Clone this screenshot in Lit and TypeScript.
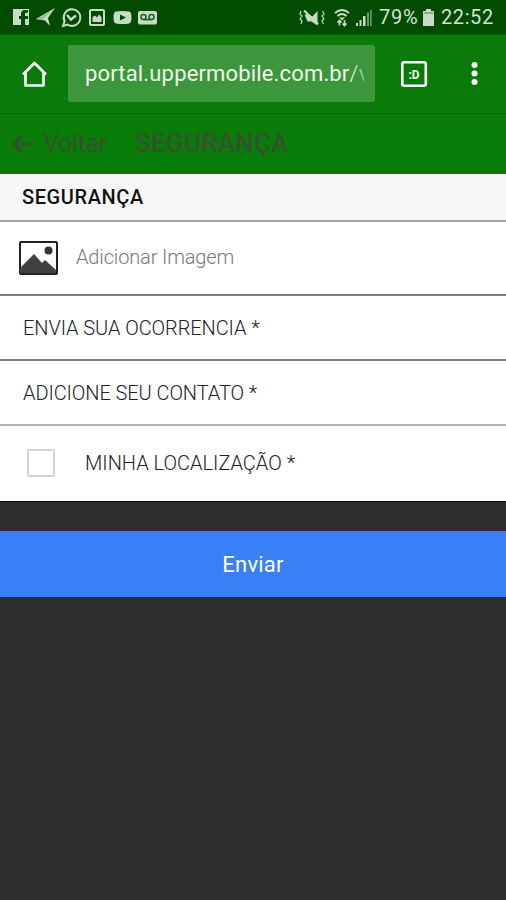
import { LitElement, html, css } from "lit";
import { customElement } from "lit/decorators.js";

@customElement("status-bar")
class StatusBar extends LitElement {
  static styles = css`
    :host { display: flex; height: 34px; background: #004b00; color: #d3e3d0; align-items: center; }
    svg { display: block; flex: none; fill: #c8dcc5; }
    .text { font-size: 20px; line-height: 34px; white-space: nowrap; }
    .percent { width: 41px; margin-left: 5px; letter-spacing: 0.7px; }
    .clock { margin-left: 6px; letter-spacing: 0.6px; }
    .battery { margin-left: 2px; }
    .right { margin-left: auto; display: flex; width: 207px; align-items: center; height: 34px; }
  `;
  render() {
    return html`
      <svg width="170" height="34" viewBox="0 0 170 34">
        <path d="M13 9h16v16h-4v-6h3v-3h-3v-2q0-1.500 2-1.500h1V10h-3q-4 0-4 4v2h-2v3h2v6h-8z" />
        <path d="M55 8L36 19l9 1.500 5 5.500-2-8z" />
        <path d="M55 8L36 19l6 1z" fill="#9dbb9a" />
        <path d="M63 26l1.600-4.700A8.300 8.300 0 1 1 67.500 24.500z" fill="none" stroke="#c8dcc5" stroke-width="2" />
        <path d="M67 15l4 4.500 5-4" fill="none" stroke="#c8dcc5" stroke-width="2.400" />
        <rect x="90" y="10" width="14" height="15" rx="1" fill="none" stroke="#c8dcc5" stroke-width="2" />
        <path d="M92.500 22v-5l2.500-1.500 2 2 2-3 2.500 2.500v5z" />
        <path fill-rule="evenodd" d="M116 11.500q6-1 13 0 2.500.3 2.500 6t-2.500 6q-7 1-13 0-2.500-.3-2.500-6t2.500-6zm4 3v6l6-3z" />
        <rect x="138" y="11" width="19" height="13.500" rx="2" />
        <g fill="none" stroke="#1c5e1c" stroke-width="1.500">
          <circle cx="143.500" cy="17" r="2.500" /><circle cx="151.500" cy="17" r="2.500" />
          <path d="M143.500 19.700h8" />
        </g>
      </svg>
      <div class="right">
        <svg width="75" height="34" viewBox="299 0 75 34">
          <path d="M304.500 14.500h4l4 2 5-5.500v14.500l-6-4h-4z" />
          <path d="M304 10.500l14 13.500" stroke="#c8dcc5" stroke-width="2.200" />
          <path d="M301 11l-1 3 2 2-2 3 2 2-1 3M322.500 11l1.500 3-2 2 2 3-2 2 1.500 3" fill="none" stroke="#b3ccb0" stroke-width="1.300" />
          <g fill="none" stroke="#c8dcc5" stroke-width="1.900">
            <path d="M335 13q7-6 14 0M337.500 16q4.500-4 9 0" />
          </g>
          <path d="M339 17.500h6l-3 3z" />
          <path d="M339.500 20v5.500M344.500 20v5.500M337.500 22.500l2-2 2 2M342.500 23.500l2 2 2-2" fill="none" stroke="#c8dcc5" stroke-width="1.600" />
          <path d="M356 23h2v3h-2zM359.500 20h2v6h-2zM363 16h2.500v10H363z" />
          <path d="M367 12.500h2v13.500h-2zM370 10h1.700v16H370z" fill="#69966a" />
        </svg>
        <span class="text percent">79%</span>
        <svg class="battery" width="13" height="34" viewBox="0 0 13 34">
          <path d="M4 9h5v2h3v15H1V11h3z" />
          <path d="M2 12h9v2H2z" fill="#88aa86" />
        </svg>
        <span class="text clock">22:52</span>
      </div>
    `;
  }
}

@customElement("browser-bar")
class BrowserBar extends LitElement {
  static styles = css`
    :host { display: flex; height: 80px; box-sizing: border-box; background: #0a7b0a; border-top: 1px solid #066206; border-bottom: 1px solid #076a07; align-items: center; }
    svg { display: block; flex: none; }
    .home { width: 68px; }
    .url { width: 307px; height: 57px; margin-top: -1px; box-sizing: border-box; padding-left: 17px; border-radius: 3px; background: #3c973c; color: #f1f8ef; font-size: 22px; line-height: 58px; white-space: nowrap; overflow: hidden; }
    .text { display: block; width: 279px; overflow: hidden; letter-spacing: 0.16px; }
    .fade { background: linear-gradient(90deg, #d5e9d2, #6aaf69 20px); background-clip: text; -webkit-background-clip: text; color: transparent; }
    .mark { font-size: 13px; font-weight: 700; fill: #fff; }
  `;
  render() {
    return html`
      <svg class="home" height="78" viewBox="0 35 68 78">
        <path d="M23 74.500L34.500 63 46 74.500M25.500 73v12.500h18V73" fill="none" stroke="#fff" stroke-width="2.700" stroke-linejoin="round" />
      </svg>
      <div class="url"><span class="text">portal.uppermobile.com.br<span class="fade">/v</span></span></div>
      <svg width="131" height="78" viewBox="375 35 131 78">
        <rect x="402.300" y="62.300" width="23.500" height="23.500" rx="2" fill="none" stroke="#fff" stroke-width="2.600" />
        <text class="mark" x="408.500" y="78.500" textLength="11" lengthAdjust="spacingAndGlyphs">:D</text>
        <g fill="#fff"><circle cx="474.500" cy="65" r="3" /><circle cx="474.500" cy="73.500" r="3" /><circle cx="474.500" cy="82" r="3" /></g>
      </svg>
    `;
  }
}

@customElement("app-root")
class AppRoot extends LitElement {
  static styles = css`
    :host { display: flex; flex-direction: column; height: 900px; overflow: hidden; background: #2d2d2d; font-family: Roboto, "Liberation Sans", sans-serif; }
    svg { display: block; flex: none; }
    .nav { display: flex; height: 60px; align-items: center; background: #087c08; color: #37512f; font-size: 25px; padding-left: 11px; box-sizing: border-box; }
    .back { width: 92px; margin-left: 8px; padding-bottom: 2px; white-space: nowrap; letter-spacing: -0.4px; }
    .heading { font-weight: 500; padding-bottom: 2px; white-space: nowrap; font-size: 26px; letter-spacing: 0.25px; }
    .section { height: 48px; box-sizing: border-box; background: #f7f7f7; border-bottom: 2px solid #a2a2a2; padding-left: 22px; color: #111; font-size: 20px; font-weight: 500; line-height: 47px; letter-spacing: 0.6px; }
    .row { display: flex; align-items: center; box-sizing: border-box; background: #fff; padding-left: 23px; color: #222; font-size: 20px; font-weight: 300; border-bottom: 2px solid #7c7c7c; white-space: nowrap; }
    .image { height: 74px; padding-left: 19px; color: #777; }
    .image .label { margin-left: 18px; padding-bottom: 3px; letter-spacing: -0.15px; }
    .field { height: 65px; letter-spacing: -0.08px; }
    .contact { border-color: #b0b0b0; }
    .place { height: 76px; border-bottom: 1px solid #000; padding: 0 0 1px 27px; }
    .box { width: 28px; height: 28px; box-sizing: border-box; border: 2px solid #d3d3d3; border-radius: 2px; margin-right: 30px; }
    .send { display: block; margin: 29px 0 0; padding: 0; height: 66px; border: 0; background: #397ff5; color: #fff; font: 400 22px/67px Roboto, sans-serif; letter-spacing: 0.2px; text-align: center; }
  `;
  render() {
    return html`
      <status-bar></status-bar>
      <browser-bar></browser-bar>
      <nav class="nav">
        <svg width="24" height="24" viewBox="0 0 24 24"><path d="M23 12H3M11 3l-8 9 8 9" fill="none" stroke="#37512f" stroke-width="3" /></svg>
        <span class="back">Voltar</span>
        <span class="heading">SEGURANÇA</span>
      </nav>
      <div class="section">SEGURANÇA</div>
      <div class="row image">
        <svg width="39" height="34" viewBox="0 0 39 34">
          <rect x="1" y="1" width="37" height="32" rx="1" fill="#fff" stroke="#222" stroke-width="2" />
          <path d="M1 31V27L15 13l8 9 3-3 11 10v3H1z" fill="#414141" />
          <circle cx="29.500" cy="9.500" r="4" fill="#333" />
        </svg>
        <span class="label">Adicionar Imagem</span>
      </div>
      <div class="row field">ENVIA SUA OCORRENCIA *</div>
      <div class="row field contact">ADICIONE SEU CONTATO *</div>
      <div class="row place"><span class="box"></span>MINHA LOCALIZAÇÃO *</div>
      <button class="send">Enviar</button>
    `;
  }
}
